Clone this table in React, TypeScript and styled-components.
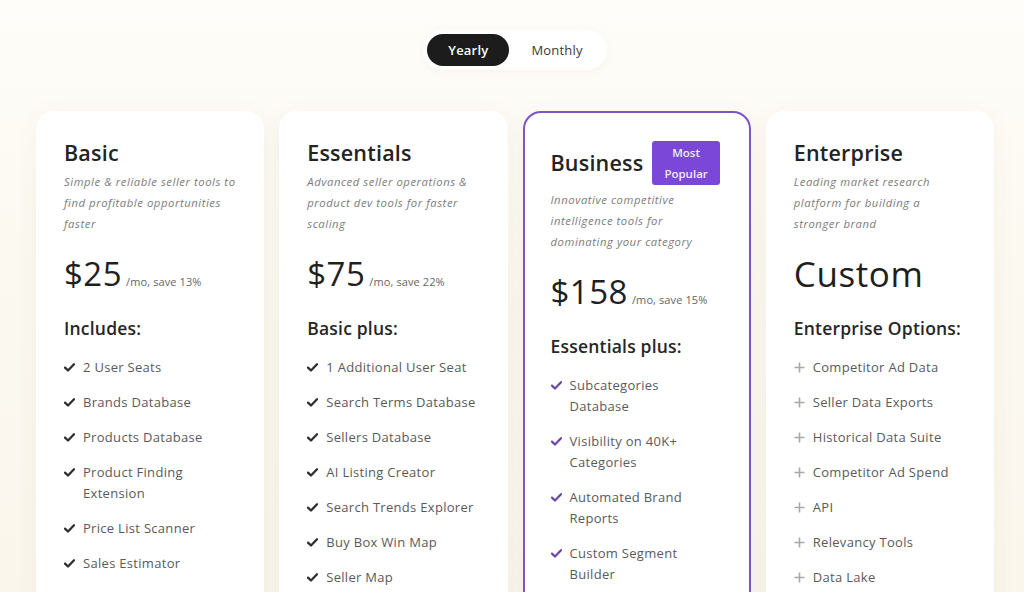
import React from "react";
import styled, { createGlobalStyle } from "styled-components";

const Global = createGlobalStyle`
  html, body { margin: 0; padding: 0; }
  body {
    background: linear-gradient(180deg, #fffdf9 0%, #fcf9f1 40%, #faf6ec 100%);
    font-family: "Open Sans", "Noto Sans", sans-serif;
    height: 592px;
    overflow: hidden;
  }
`;

const Page = styled.div`
  display: flex;
  flex-direction: column;
  align-items: stretch;
  padding: 30px 30px 0 36px;
`;

const ToggleWrap = styled.div`
  align-self: center;
  display: flex;
  gap: 2px;
  padding: 4px;
  background: #ffffff;
  border-radius: 999px;
  box-shadow: 0 2px 10px rgba(120, 100, 60, 0.05);
`;

const ToggleBtn = styled.div<{ $active?: boolean }>`
  height: 32px;
  padding: 0 ${(p) => (p.$active ? "21px" : "20px")};
  display: flex;
  align-items: center;
  border-radius: 999px;
  font-size: 13px;
  font-weight: ${(p) => (p.$active ? 600 : 500)};
  color: ${(p) => (p.$active ? "#ffffff" : "#3a3a3a")};
  background: ${(p) => (p.$active ? "#1c1c1c" : "transparent")};
  letter-spacing: 0.2px;
`;

const Cards = styled.div`
  margin-top: 41px;
  display: grid;
  grid-template-columns: repeat(4, 1fr);
  gap: 15px;
`;

const Card = styled.div<{ $featured?: boolean }>`
  background: #ffffff;
  border-radius: 18px;
  border: 2px solid ${(p) => (p.$featured ? "#7d55c4" : "transparent")};
  padding: ${(p) => (p.$featured ? "28px" : "26px")} 26px 40px 26px;
  min-height: 520px;
  box-shadow: 0 4px 24px rgba(90, 70, 30, 0.05);
`;

const TitleRow = styled.div`
  display: flex;
  align-items: center;
  gap: 9px;
`;

const Title = styled.h2`
  margin: 0;
  font-size: 21.5px;
  line-height: 28px;
  font-weight: 600;
  color: #232323;
  letter-spacing: 0.2px;
`;

const Badge = styled.div`
  background: #7b47d8;
  color: #f1ebff;
  font-size: 11.5px;
  font-weight: 600;
  line-height: 21px;
  padding: 1px 12px;
  border-radius: 3px;
  text-align: center;
`;

const Desc = styled.p`
  margin: 4px 0 0 0;
  font-size: 11.3px;
  line-height: 21px;
  font-style: italic;
  color: #7c7c7c;
  letter-spacing: 0.55px;
`;

const PriceRow = styled.div`
  margin-top: 20px;
  display: flex;
  align-items: baseline;
  gap: 4px;
  height: 40px;
`;

const Price = styled.span`
  font-size: 33px;
  line-height: 40px;
  color: #1f1f1f;
  font-weight: 500;
  letter-spacing: 0.5px;
`;

const Custom = styled.span`
  font-size: 35px;
  line-height: 40px;
  color: #1f1f1f;
  font-weight: 400;
  letter-spacing: 0.6px;
`;

const Per = styled.span`
  font-size: 11px;
  color: #666;
  letter-spacing: 0.1px;
`;

const ListHead = styled.h3`
  margin: 21px 0 0 0;
  font-size: 17.5px;
  line-height: 26px;
  font-weight: 600;
  color: #262626;
  letter-spacing: 0.2px;
`;

const List = styled.ul`
  list-style: none;
  margin: 16px 0 0 0;
  padding: 0;
  display: flex;
  flex-direction: column;
  gap: 14px;
`;

const Item = styled.li`
  display: flex;
  align-items: flex-start;
  gap: 7px;
  font-size: 13px;
  line-height: 21px;
  color: #5a5a5a;
  letter-spacing: 0.3px;
`;

const IconBox = styled.span<{ $color: string }>`
  flex: none;
  width: 12px;
  height: 21px;
  display: flex;
  align-items: center;
  color: ${(p) => p.$color};
`;

const Check = () => (
  <svg width="11" height="9" viewBox="0 0 11 9" aria-hidden>
    <path d="M1 4.6 L4 7.5 L10 1.3" fill="none" stroke="currentColor" strokeWidth="2.3" strokeLinecap="round" strokeLinejoin="round" />
  </svg>
);

const Plus = () => (
  <svg width="11" height="11" viewBox="0 0 11 11" aria-hidden>
    <path d="M5.5 0.5 V10.5 M0.5 5.5 H10.5" fill="none" stroke="currentColor" strokeWidth="1.6" />
  </svg>
);

type Plan = {
  name: string;
  desc: string[];
  price?: string;
  per?: string;
  custom?: string;
  head: string;
  items: string[][];
  featured?: boolean;
  plus?: boolean;
};

const plans: Plan[] = [
  {
    name: "Basic",
    desc: ["Simple & reliable seller tools to", "find profitable opportunities", "faster"],
    price: "$25",
    per: "/mo, save 13%",
    head: "Includes:",
    items: [["2 User Seats"], ["Brands Database"], ["Products Database"], ["Product Finding", "Extension"], ["Price List Scanner"], ["Sales Estimator"]],
  },
  {
    name: "Essentials",
    desc: ["Advanced seller operations &", "product dev tools for faster", "scaling"],
    price: "$75",
    per: "/mo, save 22%",
    head: "Basic plus:",
    items: [["1 Additional User Seat"], ["Search Terms Database"], ["Sellers Database"], ["AI Listing Creator"], ["Search Trends Explorer"], ["Buy Box Win Map"], ["Seller Map"]],
  },
  {
    name: "Business",
    featured: true,
    desc: ["Innovative competitive", "intelligence tools for", "dominating your category"],
    price: "$158",
    per: "/mo, save 15%",
    head: "Essentials plus:",
    items: [["Subcategories", "Database"], ["Visibility on 40K+", "Categories"], ["Automated Brand", "Reports"], ["Custom Segment", "Builder"]],
  },
  {
    name: "Enterprise",
    desc: ["Leading market research", "platform for building a", "stronger brand"],
    custom: "Custom",
    head: "Enterprise Options:",
    plus: true,
    items: [["Competitor Ad Data"], ["Seller Data Exports"], ["Historical Data Suite"], ["Competitor Ad Spend"], ["API"], ["Relevancy Tools"], ["Data Lake"]],
  },
];

const Lines = ({ lines }: { lines: string[] }) => (
  <>
    {lines.map((l, i) => (
      <React.Fragment key={i}>
        {i > 0 && <br />}
        {l}
      </React.Fragment>
    ))}
  </>
);

export default function App() {
  return (
    <>
      <Global />
      <Page>
        <ToggleWrap>
          <ToggleBtn $active>Yearly</ToggleBtn>
          <ToggleBtn>Monthly</ToggleBtn>
        </ToggleWrap>
        <Cards>
          {plans.map((p) => (
            <Card key={p.name} $featured={p.featured}>
              <TitleRow>
                <Title>{p.name}</Title>
                {p.featured && (
                  <Badge>
                    Most
                    <br />
                    Popular
                  </Badge>
                )}
              </TitleRow>
              <Desc>
                <Lines lines={p.desc} />
              </Desc>
              <PriceRow>
                {p.custom ? (
                  <Custom>{p.custom}</Custom>
                ) : (
                  <>
                    <Price>{p.price}</Price>
                    <Per>{p.per}</Per>
                  </>
                )}
              </PriceRow>
              <ListHead>{p.head}</ListHead>
              <List>
                {p.items.map((it, i) => (
                  <Item key={i}>
                    <IconBox $color={p.plus ? "#a9a9a9" : p.featured ? "#6c47a8" : "#2e2e2e"}>
                      {p.plus ? <Plus /> : <Check />}
                    </IconBox>
                    <span>
                      <Lines lines={it} />
                    </span>
                  </Item>
                ))}
              </List>
            </Card>
          ))}
        </Cards>
      </Page>
    </>
  );
}
